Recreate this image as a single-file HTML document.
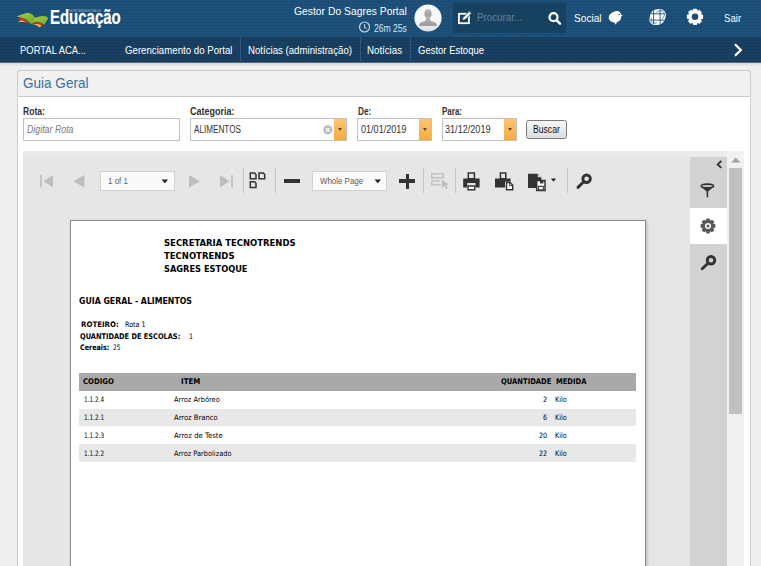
<!DOCTYPE html>
<html lang="pt-BR">
<head>
<meta charset="utf-8">
<title>Guia Geral</title>
<style>
*{box-sizing:border-box;margin:0;padding:0}
html,body{width:761px;height:566px;overflow:hidden;background:#efefef;font-family:"Liberation Sans",sans-serif;font-size:12px;color:#222}
.a{position:absolute}
.t{position:absolute;white-space:nowrap;line-height:1;transform-origin:0 50%}
svg{position:absolute;overflow:visible}
#hdr{position:absolute;left:0;top:0;width:761px;height:62.6px}
#nav{position:absolute;left:0;top:37px;width:761px;height:25.6px;background:rgba(12,22,30,.27)}
#nsh{position:absolute;left:0;top:62.6px;width:761px;height:4px;background:linear-gradient(#d9d9d9,#efefef)}
.sep{position:absolute;top:37px;width:1px;height:25.6px;background:#31597a}
#panel{position:absolute;left:17px;top:70px;width:734px;height:520px;background:#fff;border:1px solid #cdcdcd;border-radius:3px}
#ptitle{position:absolute;left:17px;top:70px;width:734px;height:26.7px;background:#f1f1f1;border:1px solid #cbcbcb;border-radius:3px 3px 0 0}
.inp{position:absolute;top:118px;height:23px;border:1px solid #c2c2c2;background:#fff}
.dd{position:absolute;top:119px;width:12px;height:21px;background:linear-gradient(#fbc674,#f5aa40)}
.dd:after{content:"";position:absolute;left:3.5px;top:9.3px;border:2.5px solid transparent;border-top:3px solid #5a4a30;border-bottom:0}
#viewer{position:absolute;left:23px;top:151.2px;width:721px;height:420px;background:#e6e6e6}
#vtop{position:absolute;left:23px;top:151.2px;width:721px;height:5.8px;background:#ebebeb}
#side{position:absolute;left:690px;top:157px;width:37px;height:420px;background:#d2d2d2}
#seltab{position:absolute;left:690px;top:207.9px;width:37px;height:36px;background:#fff}
#sb{position:absolute;left:727px;top:151.2px;width:17px;height:420px;background:#f1f1f1}
#thumb{position:absolute;left:729.3px;top:168px;width:12.6px;height:246px;background:#c1c1c1}
#page{position:absolute;left:69.5px;top:219.8px;width:576px;height:360px;background:#fff;border:1px solid #8c8c8c;box-shadow:1px 1px 3px rgba(0,0,0,.2)}
.tsep{position:absolute;top:168.3px;width:1px;height:25.2px;background:#c4c4c4}
.sel{position:absolute;top:171.2px;height:19.4px;background:#fafafa;border:1px solid #d2d2d2}
.row{position:absolute;left:79px;width:557px}
</style>
</head>
<body>
<svg id="hdr" width="761" height="62.6"><defs><pattern id="hp" width="3" height="3" patternUnits="userSpaceOnUse"><rect width="3" height="3" fill="#1d4f79"/><rect y="1" width="3" height="1" fill="#1c4b71"/><rect width="1" height="1" fill="#1c5581"/><rect y="2" width="1" height="1" fill="#1c5581"/></pattern></defs><rect width="761" height="62.6" fill="url(#hp)"/></svg>
<div id="nav"></div><div id="nsh"></div>
<div class="sep" style="left:240px"></div>
<div class="sep" style="left:359.5px"></div>
<div class="sep" style="left:409.5px"></div>

<!-- logo bird -->
<svg style="left:16px;top:11.7px" width="33" height="17" viewBox="0 0 33 17">
  <defs><linearGradient id="lg1" x1="0" y1="0" x2="1" y2="1"><stop offset="0" stop-color="#a5cf3a"/><stop offset="1" stop-color="#6fae30"/></linearGradient></defs>
  <path d="M1.8 10.6C2.8 9.5 3.8 8.7 4.7 8.3 6 8.4 7.5 8.8 8.7 9.2 10.3 9.7 11.8 10.5 12.8 11.2 11 10.6 9.2 10.2 7.6 10.1 6 10 4.6 9.9 3.5 9.9z" fill="#f6b62c"/>
  <path d="M1.2 7.4C2.4 6.7 3.6 6 4.7 5.7 6.3 6 8 6.7 9.3 7.4 11 8.5 12.4 9.9 13.3 11.2 12.4 10.9 11.4 10.6 10.5 10.3 9 9.4 7.4 8.5 5.8 8 4.3 7.6 2.7 7.4 1.2 7.4z" fill="#e3262a"/>
  <path d="M.6 4.5C4 3.5 7.5 1.8 10.5 1.1 12.2.8 13.8 1.1 15.1 1.7 16.7 2.6 18 4 19.1 5.7L14.8 11.9C13 9.6 10.5 7.4 7.6 6.3 5.5 5.4 3 4.9.6 4.5z" fill="url(#lg1)"/>
  <path d="M15.65 12.05C17.6 11.8 19.6 11.7 21.4 11.8 23 12.2 24.4 12.7 25.5 13.2L23.75 15.6C22.9 14.8 21.9 14.1 20.9 13.5 19.3 12.8 17.5 12.3 15.65 12.05z" fill="#f6b62c"/>
  <path d="M15.1 11.8C17 10.9 19 10.2 20.9 9.9 22.3 10 23.7 10.4 24.9 10.9 25.9 11.3 26.8 11.8 27.5 12.35L26.06 13.3C24.6 12.5 23 11.9 21.4 11.5 19.5 11.4 17.5 11.7 15.65 12.1z" fill="#e3262a"/>
  <path d="M19.1 5.7C21.3 4.8 23.7 4.2 26.1 3.95 27.7 3.9 29.3 4.1 30.7 4.5 31.4 5 31.9 5.7 32.15 6.55L28.4 12.7C27.7 12.1 26.9 11.6 26.05 11.2 24.4 10.4 22.6 9.9 20.85 9.75 18.8 10 16.7 10.8 14.8 11.9z" fill="url(#lg1)"/>
</svg>

<!-- clock -->
<svg style="left:358px;top:21.4px" width="13" height="12" viewBox="0 0 13 12"><circle cx="6.5" cy="6" r="5" fill="none" stroke="#c9d5df" stroke-width="1.2"/><path d="M6.5 3.2V6.2L8.4 7.6" fill="none" stroke="#c9d5df" stroke-width="1.1"/></svg>

<!-- avatar -->
<svg style="left:414.4px;top:3.5px" width="28" height="28" viewBox="0 0 28 28">
  <defs><clipPath id="avc"><circle cx="14" cy="14" r="13.6"/></clipPath><linearGradient id="avg" x1="0" y1="0" x2="0" y2="1"><stop offset="0" stop-color="#ffffff"/><stop offset=".6" stop-color="#f6f6f6"/><stop offset="1" stop-color="#dedede"/></linearGradient><linearGradient id="avp" x1="0" y1="0" x2="0" y2="1"><stop offset="0" stop-color="#b4b6b8"/><stop offset="1" stop-color="#9a9b9d"/></linearGradient></defs>
  <circle cx="14" cy="14" r="13.6" fill="url(#avg)"/>
  <g clip-path="url(#avc)" fill="url(#avp)"><ellipse cx="14" cy="9.600" rx="3.600" ry="4.400"/><path d="M11.900 12.500h4.200v3.200c0 .8.800 1.300 2.600 1.900 2.400.8 3.800 1.500 4 3.200v1.300H5.300v-1.300c.2-1.700 1.600-2.400 4-3.200 1.800-.6 2.600-1.100 2.600-1.900z"/></g>
</svg>

<!-- search box -->
<div class="a" style="left:453px;top:3px;width:113px;height:30px;background:#17425f"></div>
<!-- pencil-square -->
<svg style="left:457px;top:10px" width="16" height="15" viewBox="0 0 16 15">
  <rect x="1.900" y="3.800" width="10" height="9.400" fill="none" stroke="#fff" stroke-width="1.800"/>
  <path d="M5 10.600l.9-3L12.300 1.300l2.100 2.100L8 9.700z" fill="#fff" stroke="#17425f" stroke-width=".9"/>
  <path d="M11.500 2.100l.8-.8 2.100 2.100-.8.800z" fill="#f3c58a"/>
</svg>
<!-- magnifier -->
<svg style="left:547px;top:10.5px" width="16" height="15" viewBox="0 0 16 15"><circle cx="6.5" cy="6.2" r="4" fill="none" stroke="#fff" stroke-width="2.2"/><path d="M9.6 9.3L13 12.6" stroke="#fff" stroke-width="2.5" stroke-linecap="round"/></svg>

<!-- social bird -->
<svg style="left:607.8px;top:9.8px" width="16" height="16" viewBox="0 0 16 16">
  <path d="M6.8 1.4C8.6.6 10.8 1 12 2.3 12.7 3 13.1 3.9 13.2 4.8L14.8 5.7 13.2 6.5C13.2 9.3 11.6 11.6 8.8 12.3L7.9 14.8 6.3 12.5C3 12.3.6 10.1.7 7.3.8 4.6 3.5 2.2 6.8 1.4Z" fill="#fff"/>
  <circle cx="11.2" cy="4.5" r=".7" fill="#1c4e76"/>
</svg>

<!-- globe -->
<svg style="left:649px;top:9px" width="17" height="17" viewBox="0 0 17 17">
  <defs><clipPath id="glc"><circle cx="8.600" cy="8.100" r="7.900"/></clipPath></defs>
  <ellipse cx="8.600" cy="8.100" rx="9.200" ry="6.600" transform="rotate(-40 8.600 8.100)" fill="#fff"/>
  <circle cx="8.600" cy="8.100" r="7.800" fill="#fff"/>
  <g clip-path="url(#glc)" stroke="#1c4e76" stroke-width=".9" fill="none"><path d="M4.600 0V17M11.100 0V17M0 4.800H17M0 11.100H17"/></g>
  <ellipse cx="8.600" cy="8.100" rx="8" ry="4.600" transform="rotate(-40 8.600 8.100)" fill="none" stroke="#1c4e76" stroke-width=".6" stroke-dasharray="8 6 11 7"/>
</svg>

<!-- gear -->
<svg style="left:686px;top:8px" width="18" height="18" viewBox="0 0 18 18">
  <g fill="#fff"><circle cx="9" cy="8.800" r="6.700"/>
  <g id="gt"><rect x="6.800" y="0.700" width="4.400" height="16.200" rx="1"/></g>
  <use href="#gt" transform="rotate(45 9 8.800)"/><use href="#gt" transform="rotate(90 9 8.800)"/><use href="#gt" transform="rotate(135 9 8.800)"/></g>
  <circle cx="9" cy="8.800" r="3.300" fill="#1c4e76"/>
</svg>

<!-- nav chevron -->
<svg style="left:733px;top:43px" width="10" height="14" viewBox="0 0 10 14"><path d="M2 1.3L7.8 7 2 12.7" fill="none" stroke="#fff" stroke-width="2.3"/></svg>

<div id="panel"></div>
<div id="ptitle"></div>

<div class="inp" style="left:23px;width:157px"></div>
<div class="inp" style="left:190px;width:157px"></div>
<div class="inp" style="left:357px;width:75px"></div>
<div class="inp" style="left:442px;width:75px"></div>
<div class="dd" style="left:334px"></div>
<div class="dd" style="left:419px"></div>
<div class="dd" style="left:504px"></div>
<svg style="left:322.7px;top:124.5px" width="10" height="10" viewBox="0 0 10 10"><circle cx="4.8" cy="4.8" r="4.6" fill="#bcbcbc"/><path d="M3.100 3.100l3.400 3.400M6.500 3.100L3.100 6.500" stroke="#fff" stroke-width="1.200"/></svg>
<div class="a" style="left:526px;top:120px;width:41px;height:19.4px;border:1px solid #7a7a7a;background:linear-gradient(#f7f7f7,#dedede);border-radius:2.5px"></div>

<div id="viewer"></div><div id="vtop"></div>
<div id="side"></div><div id="seltab"></div>
<div id="sb"></div><div id="thumb"></div>
<svg style="left:731px;top:157px" width="10" height="6" viewBox="0 0 10 6"><path d="M0 5.5L4.8 .6 9.6 5.5z" fill="#a3a3a3"/></svg>

<!-- toolbar -->
<svg style="left:39px;top:174px" width="200" height="15" viewBox="0 0 200 15" fill="#bdbdbd">
  <rect x="1.2" y="1" width="1.6" height="12.4"/><path d="M14 1v12.4L4.6 7.2z"/>
  <path d="M45.4 1v12.4L34.3 7.2z"/>
  <path d="M150 1v12.4L161 7.2z"/>
  <path d="M181 1v12.4L190.4 7.2z"/><rect x="192.2" y="1" width="1.6" height="12.4"/>
</svg>
<div class="sel" style="left:100px;width:75px"></div>
<svg style="left:161px;top:178.5px" width="8" height="5" viewBox="0 0 8 5"><path d="M0.5 .4h6.6L3.8 4.3z" fill="#222"/></svg>
<div class="sel" style="left:312.3px;width:74.4px"></div>
<svg style="left:373.5px;top:178.5px" width="8" height="5" viewBox="0 0 8 5"><path d="M0.5 .4h6.6L3.8 4.3z" fill="#222"/></svg>
<div class="tsep" style="left:243px"></div>
<div class="tsep" style="left:274.9px"></div>
<div class="tsep" style="left:423.2px"></div>
<div class="tsep" style="left:455.2px"></div>
<div class="tsep" style="left:566.8px"></div>
<!-- multipage -->
<svg style="left:248.8px;top:172px" width="17" height="17" viewBox="0 0 17 17" fill="none" stroke="#333" stroke-width="1.5">
  <path d="M1.3 1h4.2l1.5 1.5V6.8H1.3z"/><path d="M10 1h4.2l1.5 1.5V6.8H10z"/><path d="M1.3 9.8h4.2l1.5 1.5v4.3H1.3z"/>
</svg>
<div class="a" style="left:284.1px;top:179.2px;width:15.6px;height:3.4px;background:#333"></div>
<div class="a" style="left:399.3px;top:179.4px;width:16px;height:3.2px;background:#333"></div>
<div class="a" style="left:405.7px;top:173.5px;width:3.2px;height:15px;background:#333"></div>
<!-- select tool (disabled) -->
<svg style="left:431px;top:172.5px" width="19" height="16" viewBox="0 0 19 16"><g fill="none" stroke="#bcbcbc" stroke-width="1.3"><rect x=".8" y=".8" width="11.6" height="4"/><path d="M10 11.8H.8V7.8H9"/></g><path d="M10.6 6.8l7.6 4.6-3.3.6 2 3-1.5 1-2-3.2-2.2 2.3z" fill="#bcbcbc"/></svg>
<!-- print -->
<svg style="left:463px;top:171.5px" width="18" height="19" viewBox="0 0 18 19"><path d="M5.3 1.1h6.1v5.6H5.3z" fill="none" stroke="#333" stroke-width="1.5"/><path d="M.2 6.500h16.4v8.900h-4.100v-4.300H4.3v4.300H.2z" fill="#333"/><path d="M5.100 14h6.700v3.700H5.100z" fill="#fff" stroke="#333" stroke-width="1.4"/></svg>
<!-- print layout -->
<svg style="left:495px;top:171.5px" width="19" height="19" viewBox="0 0 19 19"><path d="M5.400 1.100h5.400v5.600H5.400z" fill="none" stroke="#333" stroke-width="1.5"/><path d="M0 6.500h15.600v3.200H10v5.700H0z" fill="#333"/><path d="M11.500 10.600h3.700l2.500 2.500v4.600h-6.200z" fill="#fff" stroke="#333" stroke-width="1.4"/><path d="M14.700 10.600v3h3" fill="none" stroke="#333" stroke-width="1"/></svg>
<!-- export -->
<svg style="left:528px;top:172.5px" width="30" height="19" viewBox="0 0 30 19"><path d="M0 .7h9.600l3.700 3.700v2.800H8v7.900H0z" fill="#333"/><path d="M9.800 .9v3.300h3.300z" fill="#e6e6e6"/><path d="M8.700 7.600h8.300v9.900H8.700z" fill="#fff" stroke="#333" stroke-width="1.5"/><rect x="12" y="7.800" width="3.400" height="2.600" fill="#333"/><rect x="10.500" y="13.300" width="4.800" height="3.600" fill="#fff" stroke="#333" stroke-width="1.100"/><path d="M22.900 5.500h5.200L25.500 8.700z" fill="#222"/></svg>
<!-- toolbar search -->
<svg style="left:576px;top:173px" width="17" height="16" viewBox="0 0 17 16"><circle cx="10.6" cy="5.8" r="3.75" fill="none" stroke="#333" stroke-width="2.9"/><path d="M7.400 9L2 14.400" stroke="#333" stroke-width="2.900" stroke-linecap="round"/></svg>

<!-- sidebar icons -->
<svg style="left:716.3px;top:159.7px" width="7" height="9" viewBox="0 0 7 9"><path d="M5.3 1L1.7 4.4 5.3 7.8" fill="none" stroke="#333" stroke-width="1.8"/></svg>
<svg style="left:700px;top:182.5px" width="15" height="15" viewBox="0 0 15 15"><ellipse cx="7.4" cy="3" rx="6.1" ry="1.9" fill="#c9c9c9" stroke="#333" stroke-width="1.700"/><path d="M.8 3.200C2.800 5.200 5.400 7.200 6.600 8.600V14.200h1.600V8.600C9.400 7.200 12 5.200 14 3.200 11 5.200 3.800 5.200.8 3.200z" fill="#333"/></svg>
<svg style="left:699.7px;top:218.1px" width="16" height="16" viewBox="0 0 16 16">
  <g fill="#595959"><circle cx="8" cy="8" r="6"/><g id="g2"><rect x="6.100" y=".6" width="3.800" height="14.800" rx=".8"/></g><use href="#g2" transform="rotate(45 8 8)"/><use href="#g2" transform="rotate(90 8 8)"/><use href="#g2" transform="rotate(135 8 8)"/></g>
  <circle cx="8" cy="8" r="3" fill="#fff"/><circle cx="8" cy="8" r="1.500" fill="#595959"/>
</svg>
<svg style="left:699.8px;top:253.5px" width="17" height="16" viewBox="0 0 17 16"><circle cx="11" cy="6.3" r="3.75" fill="none" stroke="#333" stroke-width="2.9"/><path d="M7.800 9.500L2.200 14.800" stroke="#333" stroke-width="2.900" stroke-linecap="round"/></svg>

<div id="page"></div>
<div class="row" style="top:373.2px;height:18px;background:#a9a9a9"></div>
<div class="row" style="top:408.8px;height:17.7px;background:#e8e8e8"></div>
<div class="row" style="top:444.1px;height:17.6px;background:#e8e8e8"></div>

<span class="t" id="t0" style="left:49.60px;top:7.94px;font-size:19.8px;font-family:'Liberation Sans',sans-serif;font-weight:bold;color:#fff;-webkit-text-stroke:.2px #fff;transform:scaleX(0.7565)">Educação</span>
<span class="t" id="t1" style="left:69.40px;top:10.33px;font-size:2.8px;font-family:'Liberation Sans',sans-serif;color:#9fb6c8;transform:scaleX(0.8422)">SECRETARIA MUNICIPAL DE</span>
<span class="t" id="t2" style="left:294.20px;top:5.08px;font-size:11.6px;font-family:'Liberation Sans',sans-serif;color:#fff;transform:scaleX(0.8930)">Gestor Do Sagres Portal</span>
<span class="t" id="t3" style="left:374.30px;top:23.57px;font-size:10.2px;font-family:'Liberation Sans',sans-serif;color:#dbe5ee;transform:scaleX(0.8419)">26m 25s</span>
<span class="t" id="t4" style="left:477.00px;top:12.41px;font-size:10.5px;font-family:'Liberation Sans',sans-serif;color:#66839b;transform:scaleX(0.9290)">Procurar...</span>
<span class="t" id="t5" style="left:573.80px;top:13.37px;font-size:11.5px;font-family:'Liberation Sans',sans-serif;color:#fff;transform:scaleX(0.8810)">Social</span>
<span class="t" id="t6" style="left:723.60px;top:13.37px;font-size:11.5px;font-family:'Liberation Sans',sans-serif;color:#fff;transform:scaleX(0.8361)">Sair</span>
<span class="t" id="t7" style="left:20.00px;top:44.93px;font-size:11.3px;font-family:'Liberation Sans',sans-serif;color:#fff;transform:scaleX(0.8364)">PORTAL ACA...</span>
<span class="t" id="t8" style="left:125.00px;top:45.19px;font-size:11px;font-family:'Liberation Sans',sans-serif;color:#fff;transform:scaleX(0.8790)">Gerenciamento do Portal</span>
<span class="t" id="t9" style="left:248.00px;top:45.19px;font-size:11px;font-family:'Liberation Sans',sans-serif;color:#fff;transform:scaleX(0.8769)">Notícias (administração)</span>
<span class="t" id="t10" style="left:367.00px;top:45.19px;font-size:11px;font-family:'Liberation Sans',sans-serif;color:#fff;transform:scaleX(0.8805)">Notícias</span>
<span class="t" id="t11" style="left:418.00px;top:45.19px;font-size:11px;font-family:'Liberation Sans',sans-serif;color:#fff;transform:scaleX(0.8635)">Gestor Estoque</span>
<span class="t" id="t12" style="left:23.00px;top:75.70px;font-size:14.3px;font-family:'Liberation Sans',sans-serif;color:#3570a1;transform:scaleX(0.9473)">Guia Geral</span>
<span class="t" id="t13" style="left:23.10px;top:105.71px;font-size:10.5px;font-family:'Liberation Sans',sans-serif;font-weight:bold;color:#333;transform:scaleX(0.8158)">Rota:</span>
<span class="t" id="t14" style="left:190.00px;top:105.71px;font-size:10.5px;font-family:'Liberation Sans',sans-serif;font-weight:bold;color:#333;transform:scaleX(0.8568)">Categoria:</span>
<span class="t" id="t15" style="left:358.30px;top:105.71px;font-size:10.5px;font-family:'Liberation Sans',sans-serif;font-weight:bold;color:#333;transform:scaleX(0.7801)">De:</span>
<span class="t" id="t16" style="left:442.30px;top:105.71px;font-size:10.5px;font-family:'Liberation Sans',sans-serif;font-weight:bold;color:#333;transform:scaleX(0.7615)">Para:</span>
<span class="t" id="t17" style="left:27.00px;top:124.94px;font-size:10px;font-family:'Liberation Sans',sans-serif;font-style:italic;color:#7a7a7a;transform:scaleX(0.8805)">Digitar Rota</span>
<span class="t" id="t18" style="left:193.70px;top:124.94px;font-size:10px;font-family:'Liberation Sans',sans-serif;color:#333;transform:scaleX(0.8141)">ALIMENTOS</span>
<span class="t" id="t19" style="left:361.00px;top:124.94px;font-size:10px;font-family:'Liberation Sans',sans-serif;color:#333;transform:scaleX(0.9069)">01/01/2019</span>
<span class="t" id="t20" style="left:445.00px;top:124.94px;font-size:10px;font-family:'Liberation Sans',sans-serif;color:#333;transform:scaleX(0.9089)">31/12/2019</span>
<span class="t" id="t21" style="left:533.20px;top:124.73px;font-size:10px;font-family:'Liberation Sans',sans-serif;color:#111;transform:scaleX(0.8610)">Buscar</span>
<span class="t" id="t22" style="left:107.50px;top:176.80px;font-size:8.5px;font-family:'Liberation Sans',sans-serif;color:#606060;transform:scaleX(0.9351)">1 of 1</span>
<span class="t" id="t23" style="left:320.00px;top:177.10px;font-size:8.5px;font-family:'Liberation Sans',sans-serif;color:#606060;transform:scaleX(0.9306)">Whole Page</span>
<span class="t" id="t24" style="left:163.70px;top:239.08px;font-size:9px;font-family:'DejaVu Sans Condensed','DejaVu Sans','Liberation Sans',sans-serif;font-weight:bold;color:#000;transform:scaleX(1.0463)">SECRETARIA TECNOTRENDS</span>
<span class="t" id="t25" style="left:163.70px;top:252.18px;font-size:9px;font-family:'DejaVu Sans Condensed','DejaVu Sans','Liberation Sans',sans-serif;font-weight:bold;color:#000;transform:scaleX(1.0478)">TECNOTRENDS</span>
<span class="t" id="t26" style="left:163.70px;top:265.18px;font-size:9px;font-family:'DejaVu Sans Condensed','DejaVu Sans','Liberation Sans',sans-serif;font-weight:bold;color:#000;transform:scaleX(1.0193)">SAGRES ESTOQUE</span>
<span class="t" id="t27" style="left:79.30px;top:296.58px;font-size:9px;font-family:'DejaVu Sans Condensed','DejaVu Sans','Liberation Sans',sans-serif;font-weight:bold;color:#000;transform:scaleX(0.9641)">GUIA GERAL - ALIMENTOS</span>
<span class="t" id="t28" style="left:80.50px;top:320.57px;font-size:7.6px;font-family:'DejaVu Sans Condensed','DejaVu Sans','Liberation Sans',sans-serif;font-weight:bold;color:#000;transform:scaleX(1.0286)">ROTEIRO:</span>
<span class="t" id="t29" style="left:125.10px;top:320.75px;font-size:7.5px;font-family:'DejaVu Sans Condensed','DejaVu Sans','Liberation Sans',sans-serif;color:#000;transform:scaleX(0.9492)">Rota 1</span>
<span class="t" id="t30" style="left:79.50px;top:332.80px;font-size:7.8px;font-family:'DejaVu Sans Condensed','DejaVu Sans','Liberation Sans',sans-serif;font-weight:bold;color:#000;transform:scaleX(0.9444)">QUANTIDADE DE ESCOLAS:</span>
<span class="t" id="t31" style="left:189.10px;top:332.95px;font-size:7.5px;font-family:'DejaVu Sans Condensed','DejaVu Sans','Liberation Sans',sans-serif;color:#000;transform:scaleX(0.9309)">1</span>
<span class="t" id="t32" style="left:79.50px;top:343.57px;font-size:7.6px;font-family:'DejaVu Sans Condensed','DejaVu Sans','Liberation Sans',sans-serif;font-weight:bold;color:#000;transform:scaleX(0.9361)">Cereais:</span>
<span class="t" id="t33" style="left:112.80px;top:343.65px;font-size:7.5px;font-family:'DejaVu Sans Condensed','DejaVu Sans','Liberation Sans',sans-serif;color:#000;transform:scaleX(0.8844)">25</span>
<span class="t" id="t34" style="left:83.20px;top:378.40px;font-size:7.8px;font-family:'DejaVu Sans Condensed','DejaVu Sans','Liberation Sans',sans-serif;font-weight:bold;color:#000;transform:scaleX(0.9851)">CODIGO</span>
<span class="t" id="t35" style="left:181.20px;top:378.40px;font-size:7.8px;font-family:'DejaVu Sans Condensed','DejaVu Sans','Liberation Sans',sans-serif;font-weight:bold;color:#000;transform:scaleX(1.0067)">ITEM</span>
<span class="t" id="t36" style="left:500.60px;top:378.40px;font-size:7.8px;font-family:'DejaVu Sans Condensed','DejaVu Sans','Liberation Sans',sans-serif;font-weight:bold;color:#000;transform:scaleX(0.9695)">QUANTIDADE</span>
<span class="t" id="t37" style="left:555.70px;top:378.40px;font-size:7.8px;font-family:'DejaVu Sans Condensed','DejaVu Sans','Liberation Sans',sans-serif;font-weight:bold;color:#000;transform:scaleX(0.9660)">MEDIDA</span>
<span class="t" id="t38" style="left:83.70px;top:396.24px;font-size:7.4px;font-family:'DejaVu Sans Condensed','DejaVu Sans','Liberation Sans',sans-serif;color:#000;transform:scaleX(0.8639)">1.1.2.4</span>
<span class="t" id="t39" style="left:174.00px;top:396.24px;font-size:7.4px;font-family:'DejaVu Sans Condensed','DejaVu Sans','Liberation Sans',sans-serif;color:#000;transform:scaleX(1.0003)">Arroz Arbóreo</span>
<span class="t" id="t40" style="left:542.80px;top:396.24px;font-size:7.4px;font-family:'DejaVu Sans Condensed','DejaVu Sans','Liberation Sans',sans-serif;color:#000;transform:scaleX(0.9683)">2</span>
<span class="t" id="t41" style="left:555.20px;top:396.24px;font-size:7.4px;font-family:'DejaVu Sans Condensed','DejaVu Sans','Liberation Sans',sans-serif;color:#000;transform:scaleX(0.9732)">Kilo</span>
<span class="t" id="t42" style="left:83.70px;top:414.24px;font-size:7.4px;font-family:'DejaVu Sans Condensed','DejaVu Sans','Liberation Sans',sans-serif;color:#000;transform:scaleX(0.8639)">1.1.2.1</span>
<span class="t" id="t43" style="left:174.00px;top:414.24px;font-size:7.4px;font-family:'DejaVu Sans Condensed','DejaVu Sans','Liberation Sans',sans-serif;color:#000;transform:scaleX(1.0233)">Arroz Branco</span>
<span class="t" id="t44" style="left:542.80px;top:414.24px;font-size:7.4px;font-family:'DejaVu Sans Condensed','DejaVu Sans','Liberation Sans',sans-serif;color:#000;transform:scaleX(0.9683)">6</span>
<span class="t" id="t45" style="left:555.20px;top:414.24px;font-size:7.4px;font-family:'DejaVu Sans Condensed','DejaVu Sans','Liberation Sans',sans-serif;color:#000;transform:scaleX(0.9732)">Kilo</span>
<span class="t" id="t46" style="left:83.70px;top:431.89px;font-size:7.4px;font-family:'DejaVu Sans Condensed','DejaVu Sans','Liberation Sans',sans-serif;color:#000;transform:scaleX(0.8639)">1.1.2.3</span>
<span class="t" id="t47" style="left:174.00px;top:431.89px;font-size:7.4px;font-family:'DejaVu Sans Condensed','DejaVu Sans','Liberation Sans',sans-serif;color:#000;transform:scaleX(1.0411)">Arroz de Teste</span>
<span class="t" id="t48" style="left:538.70px;top:431.89px;font-size:7.4px;font-family:'DejaVu Sans Condensed','DejaVu Sans','Liberation Sans',sans-serif;color:#000;transform:scaleX(0.9683)">20</span>
<span class="t" id="t49" style="left:555.20px;top:431.89px;font-size:7.4px;font-family:'DejaVu Sans Condensed','DejaVu Sans','Liberation Sans',sans-serif;color:#000;transform:scaleX(0.9732)">Kilo</span>
<span class="t" id="t50" style="left:83.70px;top:449.84px;font-size:7.4px;font-family:'DejaVu Sans Condensed','DejaVu Sans','Liberation Sans',sans-serif;color:#000;transform:scaleX(0.8639)">1.1.2.2</span>
<span class="t" id="t51" style="left:174.00px;top:449.84px;font-size:7.4px;font-family:'DejaVu Sans Condensed','DejaVu Sans','Liberation Sans',sans-serif;color:#000;transform:scaleX(0.9962)">Arroz Parbolizado</span>
<span class="t" id="t52" style="left:538.70px;top:449.84px;font-size:7.4px;font-family:'DejaVu Sans Condensed','DejaVu Sans','Liberation Sans',sans-serif;color:#000;transform:scaleX(0.9683)">22</span>
<span class="t" id="t53" style="left:555.20px;top:449.84px;font-size:7.4px;font-family:'DejaVu Sans Condensed','DejaVu Sans','Liberation Sans',sans-serif;color:#000;transform:scaleX(0.9732)">Kilo</span>
</body>
</html>
